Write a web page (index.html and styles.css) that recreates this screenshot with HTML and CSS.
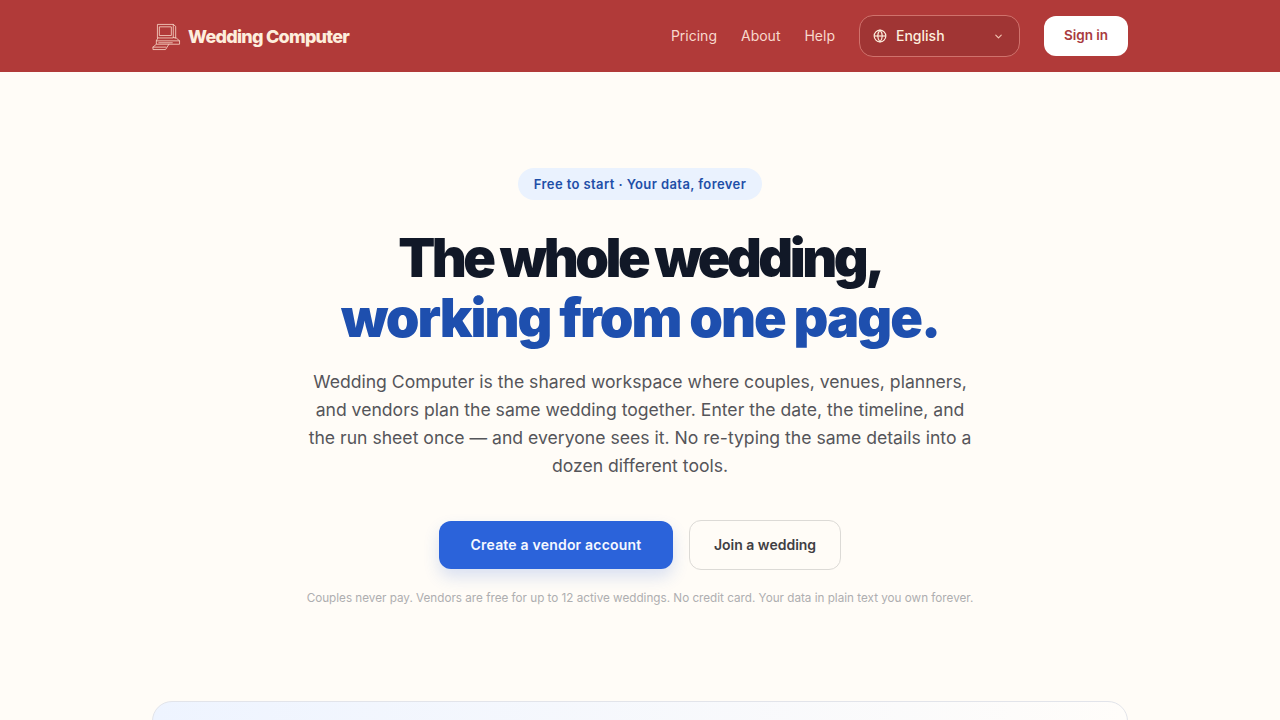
FILE: index.html
```html
<!DOCTYPE html>
<html lang="en">
<head>
	<meta charset="UTF-8">
	<meta name="viewport" content="width=device-width, initial-scale=1.0">
	<title>Wedding Computer</title>
	<link rel="stylesheet" href="styles.css">
</head>
<body>
	<header class="topbar">
		<div class="topbar-inner">
			<a class="logo" href="#">
				<svg class="logo-icon" viewBox="0 0 30 30" fill="none" stroke="currentColor" stroke-width="0.9" stroke-linejoin="round" stroke-linecap="round">
					<path d="M6 2.500h16v14H6z"/>
					<path d="M8 5h12v9H8z"/>
					<path d="M22 2.500l2.500 2v12l-2.500-0.500"/>
					<path d="M6 16.500l-1.500 3h24l-3.500-3h-1"/>
					<path d="M4.500 19.500v3.500h24v-3.500"/>
					<path d="M7 21.500h14"/>
					<path d="M4.500 23l-3.500 3v2.500h13l3.500-5.500"/>
					<path d="M1 26h13.500"/>
				</svg>
				<span>Wedding Computer</span>
			</a>
			<nav class="links">
				<a href="#">Pricing</a>
				<a href="#">About</a>
				<a href="#">Help</a>
				<div class="lang">
					<svg class="globe" viewBox="0 0 24 24" fill="none" stroke="currentColor" stroke-width="2">
						<circle cx="12" cy="12" r="10"/>
						<path d="M2 12h20"/>
						<path d="M12 2a15 15 0 0 1 0 20a15 15 0 0 1 0-20z"/>
					</svg>
					<span class="lang-name">English</span>
					<svg class="chevron" viewBox="0 0 24 24" fill="none" stroke="currentColor" stroke-width="2.500" stroke-linecap="round" stroke-linejoin="round">
						<path d="M6 9l6 6 6-6"/>
					</svg>
				</div>
				<a class="signin" href="#">Sign in</a>
			</nav>
		</div>
	</header>

	<main class="hero">
		<div class="pill">Free to start · Your data, forever</div>
		<h1><span class="dark">The whole wedding,</span><br><span class="blue">working from one page.</span></h1>
		<p class="lead">Wedding Computer is the shared workspace where couples, venues, planners, and vendors plan the same wedding together. Enter the date, the timeline, and the run sheet once — and everyone sees it. No re-typing the same details into a dozen different tools.</p>
		<div class="actions">
			<a class="btn primary" href="#">Create a vendor account</a>
			<a class="btn outline" href="#">Join a wedding</a>
		</div>
		<p class="note">Couples never pay. Vendors are free for up to 12 active weddings. No credit card. Your data in plain text you own forever.</p>
	</main>

	<section class="preview"></section>
</body>
</html>
```

FILE: styles.css
```css
body {
	margin: 0;
	background-color: #fffcf7;
	font-family: 'Inter', sans-serif;
	color: #4b4b4f;
}
a { text-decoration: none; color: inherit; }

.topbar {
	height: 72px;
	background-color: #b13a39;
}
.topbar-inner {
	width: 976px;
	height: 100%;
	margin: 0 auto;
	display: flex;
	align-items: center;
	justify-content: space-between;
}
.logo {
	display: flex;
	align-items: center;
	gap: 7px;
	color: #fdeedd;
	font-size: 18px;
	font-weight: 800;
	letter-spacing: -0.75px;
}
.logo-icon { width: 29px; height: 29px; color: #f5cfc0; }

.links {
	display: flex;
	align-items: center;
	gap: 24px;
	color: #f8d9cd;
	font-size: 14px;
}
.links > a { padding-bottom: 2px; }
.lang {
	box-sizing: border-box;
	width: 161px;
	height: 42px;
	padding: 0 15px 2px 13px;
	display: flex;
	align-items: center;
	gap: 9px;
	background-color: #a03534;
	border: 1px solid #d0726c;
	border-radius: 14px;
	color: #fdeedd;
	font-weight: 500;
}
.globe { width: 14px; height: 14px; margin-top: 2px; }
.lang-name { flex: 1; }
.chevron { width: 11px; height: 11px; margin-top: 2px; color: #f3c4b2; }
.links > .signin {
	box-sizing: border-box;
	width: 84px;
	height: 40px;
	padding: 0;
	line-height: 38px;
	text-align: center;
	background-color: #fff;
	border-radius: 12px;
	color: #a93a3e;
	font-size: 13.5px;
	font-weight: 600;
}

.hero {
	padding-top: 96px;
	display: flex;
	flex-direction: column;
	align-items: center;
	text-align: center;
}
.pill {
	height: 32px;
	padding: 0 16px;
	line-height: 32px;
	background-color: #eaf2fe;
	border-radius: 16px;
	color: #1e4fa8;
	font-size: 13px;
	font-weight: 600;
	letter-spacing: 0.4px;
}
h1 {
	margin: 28px 0 0;
	font-size: 54px;
	line-height: 60px;
	font-weight: 900;
	letter-spacing: -2px;
	color: #111827;
}
.dark { letter-spacing: -3.5px; }
.blue { color: #1e4fae; }
.lead {
	width: 680px;
	margin: 20px 0 0;
	font-size: 17.6px;
	line-height: 28px;
	color: #55555a;
}
.actions {
	margin-top: 40px;
	display: flex;
	align-items: center;
	gap: 16px;
}
.btn {
	box-sizing: border-box;
	text-align: center;
	font-size: 14px;
	font-weight: 600;
}
.primary {
	width: 234px;
	height: 48px;
	line-height: 48px;
	background-color: #2b63da;
	border-radius: 12px;
	color: #f5f8ff;
	letter-spacing: 0.2px;
	box-shadow: 0 8px 16px rgba(43, 99, 218, 0.18);
}
.outline {
	width: 152px;
	height: 50px;
	line-height: 48px;
	border: 1px solid #dcdad6;
	border-radius: 12px;
	color: #3f3f44;
}
.note {
	margin: 20px 0 0;
	font-size: 11.7px;
	line-height: 16px;
	color: #aeaeb0;
}

.preview {
	box-sizing: border-box;
	width: 976px;
	height: 400px;
	margin: 95px auto 0;
	background: linear-gradient(90deg, #eef4ff, #fffdfa);
	border: 1px solid #e2e4ea;
	border-radius: 20px;
}
```
